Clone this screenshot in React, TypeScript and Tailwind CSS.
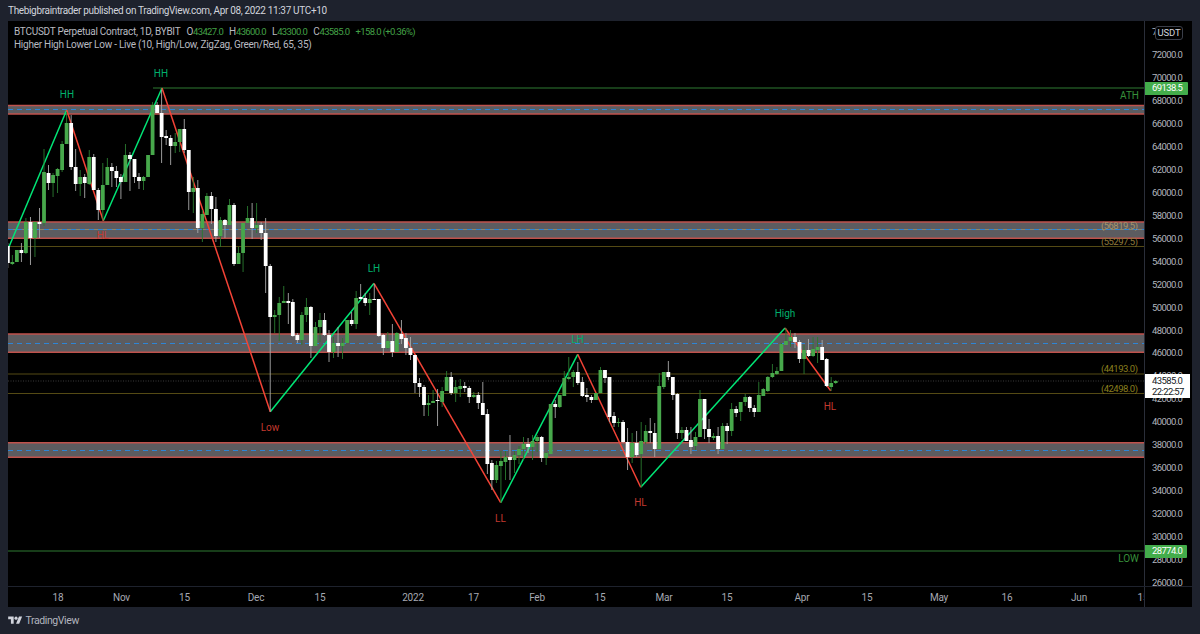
import React from "react";

type C = [number, number, number, number, number];
// top, bottom, wickTop, wickBottom, green(1)/white(0) ; index starts at -8
const candles: C[] = [
  [246,263,243,268,0],[262,264,255,265,1],[250,262,250,262,1],[250,253,243,262,0],[222,253,218,254,1],[222,238,217,265,0],[222,238,222,257,1],[222,224,208,238,0],
  [172,223,149,226,1],[173,183,165,190,0],[175,183,173,197,1],[169,176,168,193,1],[144,170,141,172,1],[123,144,112,144,1],[123,167,115,170,0],[167,184,149,191,0],
  [177,184,170,196,1],[177,183,174,198,0],[157,184,150,185,1],[157,190,154,190,0],[190,210,188,220,0],[185,210,163,220,1],[167,185,158,185,1],[167,171,163,187,0],
  [171,178,166,187,0],[177,182,174,199,0],[155,182,144,182,1],[155,159,152,191,0],[159,177,159,183,0],[177,181,173,189,0],[177,181,176,190,1],[155,177,155,177,1],
  [105,155,102,155,1],[105,113,102,113,0],[113,137,90,163,0],[136,138,130,145,0],[138,146,135,165,0],[142,146,133,153,1],[129,142,129,152,1],[129,150,119,153,0],
  [150,192,150,210,0],[188,192,177,213,1],[188,228,180,233,0],[214,228,210,242,1],[196,215,193,215,1],[196,209,192,224,0],[209,236,197,242,0],[220,236,217,247,1],
  [220,225,219,238,0],[205,225,199,225,1],[205,264,203,266,0],[253,264,247,264,1],[223,253,223,272,1],[218,223,206,223,1],[218,228,203,239,0],[225,228,203,233,1],
  [225,233,222,240,0],[233,266,218,293,0],[266,317,264,412,0],[315,317,310,333,1],[303,315,297,341,1],[301,303,286,303,1],[301,303,293,324,0],[302,336,299,337,0],
  [335,340,333,343,0],[315,340,312,345,1],[307,315,298,322,1],[307,346,306,358,0],[327,346,322,346,1],[320,327,313,342,1],[320,335,313,336,0],[335,352,330,362,0],
  [343,352,337,358,1],[343,346,327,357,0],[343,346,338,359,1],[320,343,320,343,1],[320,324,312,326,0],[298,324,291,329,1],[297,299,284,299,0],[298,303,293,306,0],
  [299,303,293,315,1],[299,300,284,300,0],[299,336,299,337,0],[335,348,334,355,0],[341,348,332,349,1],[341,352,324,357,0],[333,352,332,352,1],[334,339,320,344,0],
  [338,348,333,355,0],[348,355,337,360,0],[355,383,355,393,0],[383,387,378,397,0],[387,405,385,416,0],[403,405,395,416,1],[401,403,390,403,1],[400,401,389,426,0],
  [391,402,387,407,1],[377,391,371,391,1],[377,393,372,395,0],[387,393,380,402,1],[386,389,379,397,1],[386,388,382,392,0],[388,397,386,403,0],[395,397,392,398,1],
  [395,403,392,409,0],[403,415,382,415,0],[414,464,409,474,0],[463,480,460,490,0],[465,480,461,483,1],[461,466,451,503,1],[457,462,451,480,1],[457,460,435,480,0],
  [455,460,451,473,1],[449,455,446,464,1],[444,449,437,460,1],[444,447,438,453,0],[441,447,435,460,1],[437,441,435,452,1],[437,458,436,462,0],[453,458,452,465,1],
  [404,454,404,454,1],[404,407,400,418,0],[395,407,395,408,1],[378,396,371,396,1],[377,379,357,380,1],[372,377,370,387,1],[372,383,362,385,0],[382,396,377,397,0],
  [395,397,388,402,0],[397,400,395,403,0],[393,400,393,400,1],[370,393,367,393,1],[370,378,370,383,0],[377,417,377,422,0],[416,423,412,427,0],[422,423,418,427,1],
  [422,442,420,443,0],[442,457,428,470,0],[443,457,433,463,1],[443,455,431,457,0],[441,454,422,487,1],[431,442,425,444,1],[431,433,418,443,0],[433,449,423,457,0],
  [386,449,373,449,1],[372,387,372,389,1],[372,377,361,380,0],[377,395,377,400,0],[394,433,393,439,0],[430,433,427,439,1],[430,441,427,441,0],[440,447,427,454,0],
  [437,446,432,450,1],[399,437,390,437,1],[399,429,399,439,0],[429,437,419,443,0],[436,438,433,440,1],[436,449,427,454,0],[426,449,423,449,1],[426,431,423,444,0],
  [409,431,403,436,1],[409,413,406,417,0],[402,412,402,421,1],[397,402,394,406,1],[397,408,396,412,0],[408,412,405,417,0],[395,412,382,412,1],[389,396,388,396,1],
  [377,391,376,392,1],[373,377,364,378,1],[371,374,367,375,1],[344,371,343,371,1],[341,345,328,345,1],[337,341,330,347,1],[337,342,333,348,0],[342,359,340,363,0],
  [350,359,345,374,1],[350,356,339,357,0],[349,356,337,357,1],[347,350,337,363,1],[347,360,340,360,0],[359,386,358,387,0],[383,387,377,391,1],[381,383,380,384,1],
];

const bands = [
  { top: 105.5, bot: 114, mid: 109.5, tan: false },
  { top: 222, bot: 238.3, mid: 229.5, tan: true },
  { top: 334, bot: 352.3, mid: 343.5, tan: false },
  { top: 442.7, bot: 457.3, mid: 450.5, tan: false },
];

const labels: [string, number, number, string][] = [
  ["HH", 67, 97.5, "#00b06c"],
  ["HH", 161, 76.5, "#00b06c"],
  ["LH", 374, 271.5, "#00b06c"],
  ["LH", 577.5, 342.5, "#00b06c"],
  ["High", 785, 316.5, "#00b06c"],
  ["HL", 103, 238.5, "#c4392f"],
  ["Low", 270, 430.5, "#c4392f"],
  ["LL", 500.5, 521.5, "#c4392f"],
  ["HL", 640.5, 505.5, "#c4392f"],
  ["HL", 830, 409.5, "#c4392f"],
];

const zigzag: [string, string][] = [
  ["9,246.7 66.7,110", "#00e676"],
  ["103.3,220.7 162,88", "#00e676"],
  ["270.3,411.7 374,283.3", "#00e676"],
  ["500.7,502.7 577.7,354.3", "#00e676"],
  ["640.7,487.3 785,328", "#00e676"],
  ["66.7,110 103.3,220.7", "#f44336"],
  ["162,88 270.3,411.7", "#f44336"],
  ["374,283.3 500.7,502.7", "#f44336"],
  ["577.7,354.3 640.7,487.3", "#f44336"],
  ["785,328 830.7,390.7", "#f44336"],
];

const prices = [72000,70000,68000,66000,64000,62000,60000,58000,56000,54000,52000,50000,48000,46000,44000,42000,40000,38000,36000,34000,32000,30000,28000,26000];

const ticks: [string, number][] = [
  ["18",58],["Nov",121.5],["15",184.5],["Dec",256],["15",320],["2022",413],["17",473.5],["Feb",537],["15",600],["Mar",664],["15",727],["Apr",802],["15",867],["May",939],["16",1007],["Jun",1079],
];

export default function App() {
  return (
    <div className="w-[1200px] h-[634px] overflow-hidden bg-[#1e222d] flex flex-col font-['Roboto',sans-serif]">
      <div className="h-[21px] pl-[8px] flex items-center text-[10px] text-[#d1d4dc] whitespace-nowrap tracking-[-0.34px]">
        Thebigbraintrader published on TradingView.com, Apr 08, 2022 11:37 UTC+10
      </div>

      <div className="ml-[8px] w-[1184px] h-[586px] bg-black flex flex-col">
        <div className="flex h-[565px]">
          <div className="relative w-[1136px] h-[565px] overflow-hidden">
            <svg width="1136" height="565" viewBox="8 21 1136 565" className="block">
              {bands.map((b, i) => (
                <g key={i}>
                  <rect x="8" y={b.top} width="1136" height={b.bot - b.top} fill="#5c5c60" />
                  <line x1="8" x2="1144" y1={b.top} y2={b.top} stroke="#c0524c" strokeWidth="1.4" />
                  <line x1="8" x2="1144" y1={b.bot} y2={b.bot} stroke="#c0524c" strokeWidth="1.4" />
                  {b.tan && <line x1="8" x2="1144" y1={b.mid} y2={b.mid} stroke="#8e8568" strokeWidth="1" />}
                  <line x1="8" x2="1144" y1={b.mid} y2={b.mid} stroke="#2e85d6" strokeWidth="1.1" strokeDasharray="5 4" />
                </g>
              ))}
              <line x1="8" x2="1144" y1="246.5" y2="246.5" stroke="#544a14" />
              <line x1="8" x2="1144" y1="374" y2="374" stroke="#544a14" />
              <line x1="8" x2="1144" y1="393.5" y2="393.5" stroke="#544a14" />
              <line x1="8" x2="1144" y1="381" y2="381" stroke="#3a3a3a" strokeDasharray="1 1.5" />
              <line x1="153" x2="1144" y1="88" y2="88" stroke="#2f7a32" />
              <line x1="8" x2="1144" y1="551" y2="551" stroke="#2f7a32" />

              {zigzag.map(([pts, c], i) => (
                <polyline key={i} points={pts} fill="none" stroke={c} strokeWidth="1.5" />
              ))}

              {candles.map(([t, b, wt, wb, g], n) => {
                const x = 44 + 4.524 * (n - 8);
                return (
                  <g key={n}>
                    <rect x={x - 0.45} y={wt} width="0.9" height={wb - wt} fill={g ? "#2a7a30" : "#a8a8a8"} />
                    <rect x={x - 1.9} y={t} width="3.8" height={Math.max(b - t, 1)} fill={g ? "#47a84b" : "#ffffff"} />
                  </g>
                );
              })}

              <g className="text-[10px]" textAnchor="middle">
                {labels.map(([s, x, y, c], i) => (
                  <text key={i} x={x} y={y} fill={c}>{s}</text>
                ))}
              </g>
              <g className="text-[10px]" textAnchor="end">
                <text x="1139" y="98.5" fill="#37903b">ATH</text>
                <text x="1139" y="561.5" fill="#37903b">LOW</text>
              </g>
              <g className="text-[9.5px] tracking-[-0.5px]" textAnchor="end">
                <text x="1137.5" y="228.5" fill="#a8956a">(56819.5)</text>
                <text x="1137.5" y="245" fill="#8f7a3c">(55297.5)</text>
                <text x="1137.5" y="372" fill="#8a7f1e">(44193.0)</text>
                <text x="1137.5" y="391.5" fill="#8a7f1e">(42498.0)</text>
              </g>
            </svg>

            <div className="absolute left-[6px] top-[4px] text-[10px] leading-[13px] text-[#b8bac0] whitespace-nowrap tracking-[-0.26px]">
              <div className="flex">
                <span>BTCUSDT Perpetual Contract, 1D, BYBIT</span>
                <span className="ml-[6px]">O<span className="text-[#43a047] text-[9.5px] tracking-[-0.64px]">43427.0</span></span>
                <span className="ml-[6px]">H<span className="text-[#43a047] text-[9.5px] tracking-[-0.64px]">43600.0</span></span>
                <span className="ml-[6px]">L<span className="text-[#43a047] text-[9.5px] tracking-[-0.64px]">43300.0</span></span>
                <span className="ml-[6px]">C<span className="text-[#43a047] text-[9.5px] tracking-[-0.64px]">43585.0</span></span>
                <span className="ml-[6px] text-[#43a047] text-[9.5px] tracking-[-0.64px]">+158.0 (+0.36%)</span>
              </div>
              <div>Higher High Lower Low - Live (10, High/Low, ZigZag, Green/Red, 65, 35)</div>
            </div>
          </div>

          <div className="relative w-[48px] h-[565px] border-l border-[#2a2e39] text-[9.5px] text-[#b2b5be] whitespace-nowrap tracking-[-0.6px]">
            <div className="h-[22.94px] pl-[7px] flex items-center">
              <span>74000.0</span>
            </div>
            {prices.map((p) => (
              <div key={p} className="h-[22.94px] pl-[7px] flex items-center last:h-[12px]">
                {p}.0
              </div>
            ))}
            <div className="absolute left-[10px] top-[5px] w-[28px] h-[14px] rounded-[3px] border border-[#3a3e49] bg-black text-[#d1d4dc] tracking-[-0.2px] flex items-center justify-center">
              USDT
            </div>
            <div className="absolute left-0 top-[61px] w-[43px] h-[13px] rounded-r-[1px] bg-[#43ad4b] text-white pl-[7px] flex items-center">
              69138.5
            </div>
            <div className="absolute left-0 top-[353px] w-[45px] h-[24px] bg-white text-[#131722] leading-[11px] pl-[7px] flex flex-col justify-center">
              <span>43585.0</span>
              <span>22:22:57</span>
            </div>
            <div className="absolute left-0 top-[524px] w-[42px] h-[13px] rounded-r-[1px] bg-[#43ad4b] text-white pl-[7px] flex items-center">
              28774.0
            </div>
          </div>
        </div>

        <div className="flex h-[21px] border-t border-[#1e222d]">
          <div className="w-[1136px] flex items-center text-[10px] text-[#a6a9b2] overflow-hidden whitespace-nowrap tracking-[-0.2px]">
            {ticks.map(([s, x], i) => (
              <span
                key={i}
                className="w-[30px] shrink-0 text-center"
                style={{ marginLeft: i === 0 ? x - 8 - 15 : x - ticks[i - 1][1] - 30 }}
              >
                {s}
              </span>
            ))}
            <span className="w-[30px] ml-[34px] shrink-0 text-center">15</span>
          </div>
          <div className="w-[48px] border-l border-[#2a2e39]" />
        </div>
      </div>

      <div className="flex-1 pl-[8px] flex items-center gap-[3px]">
        <svg width="14.5" height="11" viewBox="0 0 36 28" fill="#d1d4dc">
          <path d="M14 22H7V11H0V4h14v18zM28 22h-8l7.5-18h8L28 22z" />
          <circle cx="20" cy="8" r="4" />
        </svg>
        <span className="text-[10.5px] text-[#b2b5be] tracking-[-0.4px]">TradingView</span>
      </div>
    </div>
  );
}
